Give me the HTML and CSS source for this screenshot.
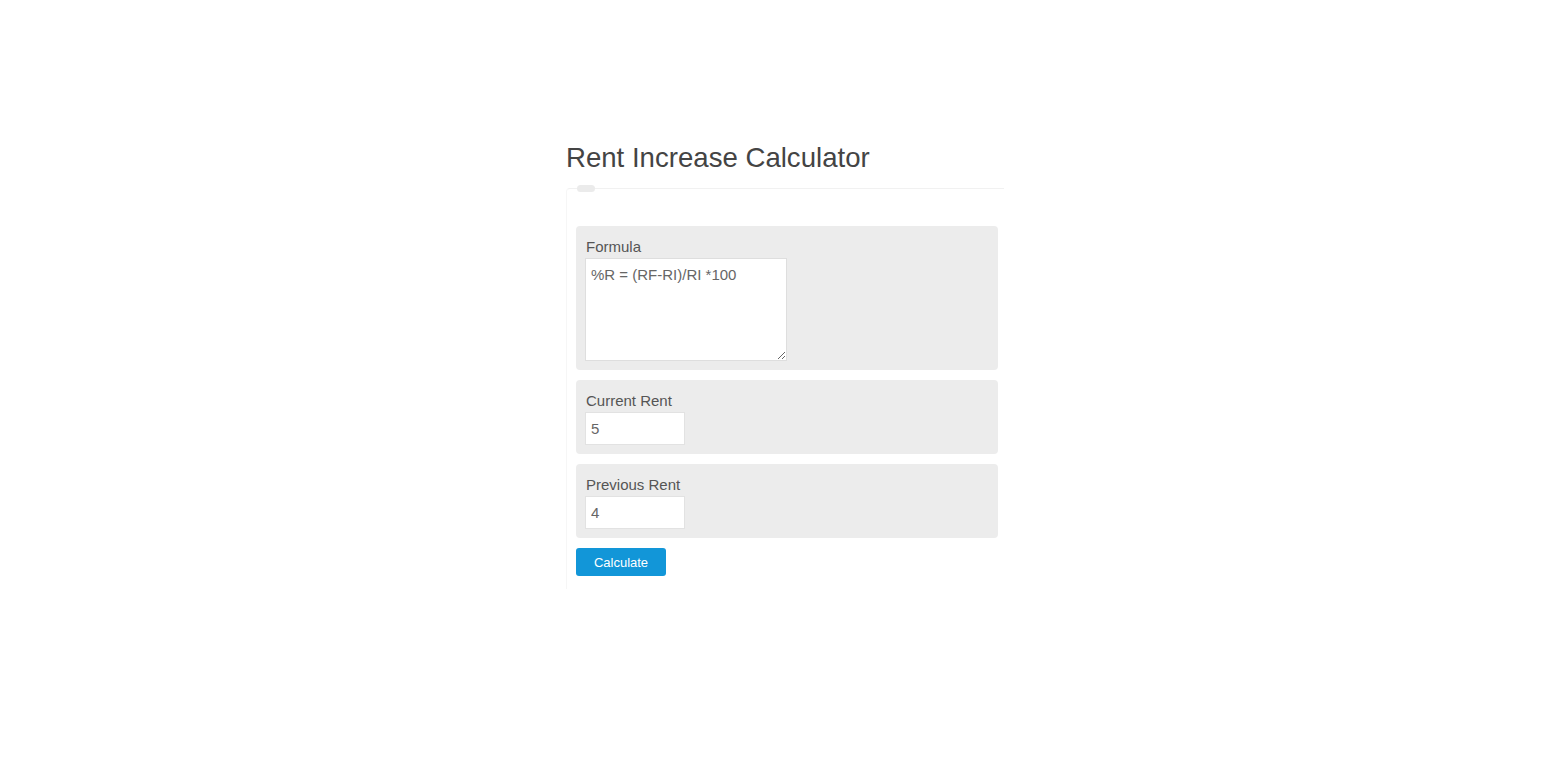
FILE: index.html
```html
<!DOCTYPE html>
<html lang="en">
<head>
<meta charset="utf-8">
<title>Rent Increase Calculator</title>
<link rel="stylesheet" href="styles.css">
</head>
<body>
<div class="wrap">
  <h1 class="title">Rent Increase Calculator</h1>
  <div class="calc">
    <span class="legend"></span>
    <div class="panel">
      <label class="lbl" for="f">Formula</label>
      <textarea id="f" class="formula">%R = (RF-RI)/RI *100</textarea>
    </div>
    <div class="panel">
      <label class="lbl" for="c">Current Rent</label>
      <input id="c" class="num" type="text" value="5">
    </div>
    <div class="panel">
      <label class="lbl" for="p">Previous Rent</label>
      <input id="p" class="num" type="text" value="4">
    </div>
    <button class="btn" type="button">Calculate</button>
  </div>
</div>
</body>
</html>
```
FILE: styles.css
```css
html, body {
  margin: 0;
  padding: 0;
  background: #ffffff;
}
body {
  font-family: "Liberation Sans", Arial, sans-serif;
}
.wrap {
  width: 438px;
  margin: 0 auto;
  padding-top: 141px;
  box-sizing: border-box;
  position: relative;
  left: 1px;
}
.title {
  margin: 0;
  font-size: 27.6px;
  line-height: 34px;
  font-weight: normal;
  color: #444444;
}
.calc {
  position: relative;
  margin-top: 13px;
  border-top: 1px solid #f1f1f1;
  border-left: 1px solid #f6f6f6;
  border-top-left-radius: 4px;
  padding: 37px 6px 13px 9px;
  display: flex;
  flex-direction: column;
  gap: 10px;
  align-items: flex-start;
}
.legend {
  position: absolute;
  left: 10px;
  top: -4px;
  width: 18px;
  height: 7px;
  border-radius: 4px;
  background: #ebebeb;
}
.panel {
  align-self: stretch;
  background: #ececec;
  border-radius: 4px;
  padding: 10px 9px 9px 9px;
  display: flex;
  flex-direction: column;
  align-items: flex-start;
}
.lbl {
  font-size: 15px;
  line-height: 22px;
  color: #555555;
  padding-left: 1px;
}
.formula {
  display: block;
  width: 202px;
  height: 103px;
  box-sizing: border-box;
  margin: 0;
  padding: 6px 5px;
  border: 1px solid #dedede;
  background: #ffffff;
  font-family: "Liberation Sans", Arial, sans-serif;
  font-size: 15px;
  line-height: 20px;
  color: #666666;
}
.num {
  display: block;
  width: 100px;
  height: 33px;
  box-sizing: border-box;
  margin: 0;
  padding: 0 5px;
  border: 1px solid #e2e2e2;
  background: #ffffff;
  font-family: "Liberation Sans", Arial, sans-serif;
  font-size: 15px;
  color: #666666;
  outline: none;
}
.btn {
  width: 90px;
  height: 28px;
  margin: 0;
  padding: 0;
  border: none;
  border-radius: 3px;
  background: #1296d8;
  color: #ffffff;
  font-family: "Liberation Sans", Arial, sans-serif;
  font-size: 13px;
  cursor: pointer;
}
```
